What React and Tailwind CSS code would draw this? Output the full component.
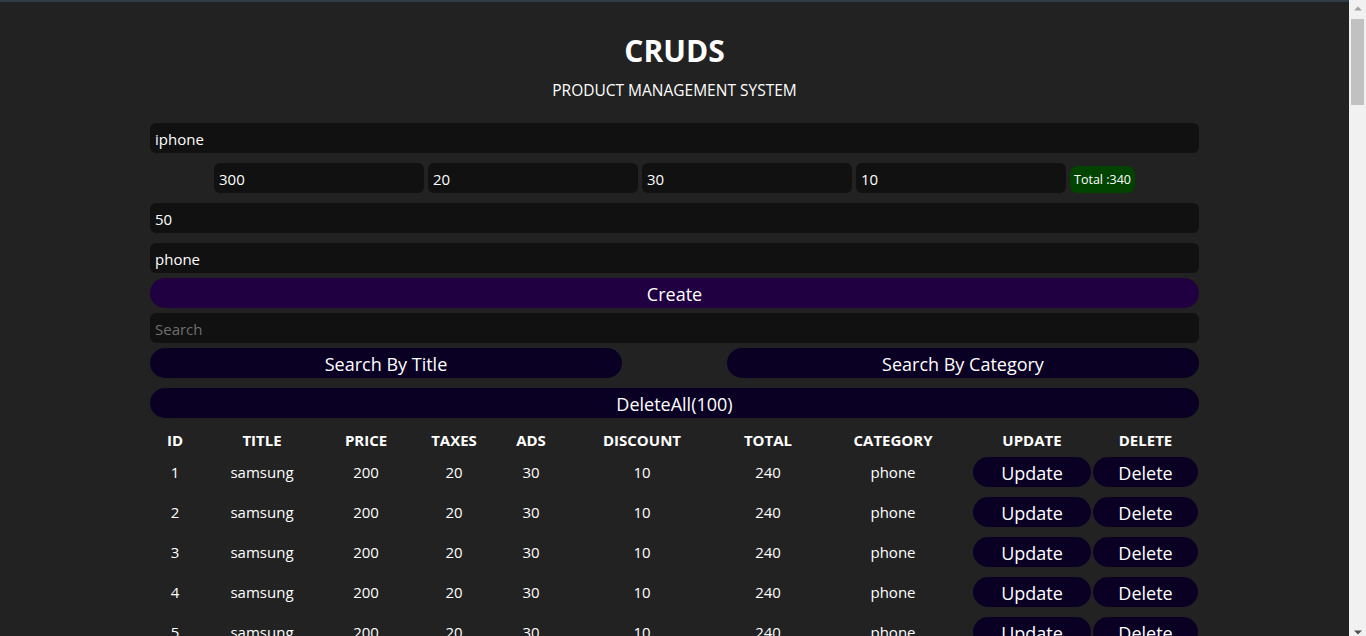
import React from "react";

const rows = Array.from({ length: 100 }, (_, i) => i + 1);

const inputCls =
  "h-[30px] w-full rounded-[6px] bg-[#111111] px-[5px] pt-[2px] text-[15px] text-white outline-none placeholder:text-[#6f6f6f]";

function FakeScrollbar() {
  return (
    <div className="flex h-full w-[17px] shrink-0 flex-col bg-[#f1f1f1]">
      <div className="flex h-[17px] items-center justify-center">
        <svg width="8" height="5" viewBox="0 0 8 5">
          <polygon points="0,4.5 4,0.5 8,4.5" fill="#a3a3a3" />
        </svg>
      </div>
      <div className="mx-[2px] mt-[2px] h-[86px] bg-[#c1c1c1]" />
      <div className="flex-1" />
      <div className="flex h-[10px] items-end justify-center pb-[1px]">
        <svg width="8" height="5" viewBox="0 0 8 5">
          <polygon points="0,0.5 8,0.5 4,4.5" fill="#505050" />
        </svg>
      </div>
    </div>
  );
}

const btn = "h-[30px] rounded-full pt-[2px] text-[18px] text-white";

export default function App() {
  return (
    <div className="flex h-screen overflow-hidden bg-[#222222] text-white [font-family:'Open_Sans',sans-serif]">
      <div className="min-w-0 flex-1 overflow-hidden border-t-2 border-[#2f3e46]">
        <div className="mx-auto w-[1049px] pb-4">
          <h1 className="mt-[31px] text-center text-[30px] font-bold leading-[36px]">CRUDS</h1>
          <p className="mt-[11px] text-center text-[15.5px] leading-[20px]">PRODUCT MANAGEMENT SYSTEM</p>

          <div className="mt-[23px] flex flex-col gap-[10px]">
            <input className={inputCls} defaultValue="iphone" />
            <div className="flex items-center justify-center gap-[4px]">
              <input className={inputCls + " !w-[210px]"} defaultValue="300" />
              <input className={inputCls + " !w-[210px]"} defaultValue="20" />
              <input className={inputCls + " !w-[210px]"} defaultValue="30" />
              <input className={inputCls + " !w-[210px]"} defaultValue="10" />
              <span className="mt-[3px] flex h-[27px] items-center rounded-[8px] bg-[#004400] px-[4px] pt-[1px] text-[12.5px] text-white">
                Total :340
              </span>
            </div>
            <input className={inputCls} defaultValue="50" />
            <input className={inputCls} defaultValue="phone" />
          </div>

          <div className="mt-[5px] flex flex-col gap-[5px]">
            <button className={btn + " w-full bg-[#200040]"}>Create</button>
            <input className={inputCls} placeholder="Search" />
            <div className="flex justify-between">
              <button className={btn + " w-[45%] bg-[#0a0024]"}>Search By Title</button>
              <button className={btn + " w-[45%] bg-[#0a0024]"}>Search By Category</button>
            </div>
          </div>
          <button className={btn + " mt-[10px] w-full bg-[#0a0024]"}>DeleteAll(100)</button>

          <table className="mt-[10px] w-full table-fixed border-collapse text-center">
            <colgroup>
              <col className="w-[50px]" />
              <col className="w-[124px]" />
              <col className="w-[84px]" />
              <col className="w-[92px]" />
              <col className="w-[62px]" />
              <col className="w-[160px]" />
              <col className="w-[92px]" />
              <col className="w-[158px]" />
              <col className="w-[120px]" />
              <col className="w-[107px]" />
            </colgroup>
            <thead>
              <tr className="h-[24px] text-[15px] font-bold">
                <th>ID</th>
                <th>TITLE</th>
                <th>PRICE</th>
                <th>TAXES</th>
                <th>ADS</th>
                <th>DISCOUNT</th>
                <th>TOTAL</th>
                <th>CATEGORY</th>
                <th>UPDATE</th>
                <th>DELETE</th>
              </tr>
            </thead>
            <tbody>
              {rows.map((id) => (
                <tr key={id} className="h-[40px] text-[15px]">
                  <td>{id}</td>
                  <td>samsung</td>
                  <td>200</td>
                  <td>20</td>
                  <td>30</td>
                  <td>10</td>
                  <td>240</td>
                  <td>phone</td>
                  <td className="px-[1px]">
                    <button className={btn + " w-full bg-[#0a0024]"}>Update</button>
                  </td>
                  <td className="px-[1px]">
                    <button className={btn + " w-full bg-[#0a0024]"}>Delete</button>
                  </td>
                </tr>
              ))}
            </tbody>
          </table>
        </div>
      </div>
      <FakeScrollbar />
    </div>
  );
}
